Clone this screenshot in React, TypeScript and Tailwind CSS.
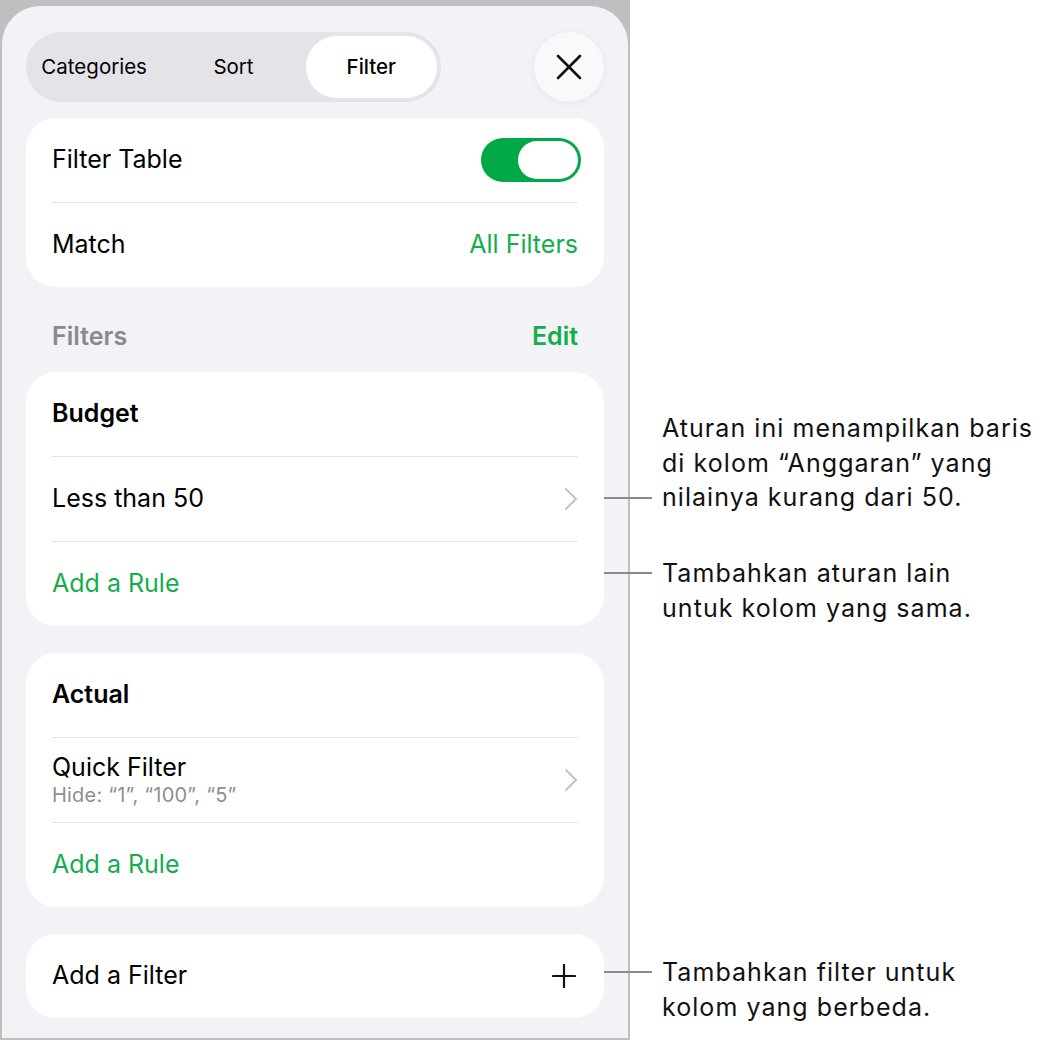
import { FC } from "react";

const green = "text-[#14ad4e]";

const Chevron: FC = () => (
  <svg width="14" height="24" viewBox="0 0 14 24" fill="none">
    <path d="M2 2l10 10-10 10" stroke="#c4c4c7" strokeWidth="2" strokeLinecap="round" strokeLinejoin="round" />
  </svg>
);

const Callout: FC<{ top: number; lineTop: number; lines: string[] }> = ({ top, lineTop, lines }) => (
  <>
    <div className="absolute left-[604px] w-[48px] h-[2px] bg-[#8a8a8a]" style={{ top: lineTop }} />
    <div
      className="absolute left-[662px] text-[25px] leading-[34.5px] text-[#111] tracking-[1.05px]"
      style={{ top }}
    >
      {lines.map((l) => (
        <div key={l}>{l}</div>
      ))}
    </div>
  </>
);

export default function App() {
  return (
    <div
      className="relative w-[1044px] h-[1041px] bg-white"
      style={{ fontFamily: "Inter, 'Noto Sans', sans-serif" }}
    >
      <div className="w-[630px] h-[1040px] bg-[#bfbfbf] pt-[6px] px-[2px] pb-[2px]">
        <div className="h-full bg-[#f2f2f7] rounded-t-[38px] px-[24px] pt-[26px] text-[25px] text-black">
          {/* top bar */}
          <div className="flex items-center justify-between">
            <div className="w-[415px] h-[70px] rounded-full bg-[#e3e3e8] p-[3px] grid grid-cols-3 text-[20.5px]">
              <div className="flex items-center justify-center pr-[6px]">Categories</div>
              <div className="flex items-center justify-center">Sort</div>
              <div className="ml-[3px] flex items-center justify-center rounded-full bg-white border border-[#e6e6ea] font-medium">
                Filter
              </div>
            </div>
            <button className="w-[70px] h-[70px] rounded-full bg-[#f9f9fb] shadow-[0_1px_8px_rgba(0,0,0,0.06)] flex items-center justify-center">
              <svg width="28" height="28" viewBox="0 0 28 28">
                <path d="M3 3l22 22M25 3L3 25" stroke="#111" strokeWidth="2.6" strokeLinecap="round" />
              </svg>
            </button>
          </div>

          {/* filter table card */}
          <div className="mt-[16px] bg-white rounded-[30px] px-[26px]">
            <div className="h-[84px] flex items-center justify-between">
              <span>Filter Table</span>
              <div className="mr-[-3px] w-[100px] h-[44px] rounded-full bg-[#00a846] p-[3px] flex justify-end">
                <div className="w-[60px] h-[38px] rounded-full bg-white" />
              </div>
            </div>
            <div className="h-[85px] border-t border-[#e3e3e6] flex items-center justify-between">
              <span>Match</span>
              <span className={green}>All Filters</span>
            </div>
          </div>

          {/* filters header */}
          <div className="h-[85px] pt-[14px] px-[26px] flex items-center justify-between">
            <span className="font-semibold text-[#8a8a8e]">Filters</span>
            <span className={`font-semibold ${green}`}>Edit</span>
          </div>

          {/* budget */}
          <div className="bg-white rounded-[30px] px-[26px]">
            <div className="h-[84px] flex items-center font-semibold">Budget</div>
            <div className="h-[85px] border-t border-[#e3e3e6] flex items-center justify-between">
              <span>Less than 50</span>
              <Chevron />
            </div>
            <div className="h-[85px] border-t border-[#e3e3e6] flex items-center">
              <span className={green}>Add a Rule</span>
            </div>
          </div>

          {/* actual */}
          <div className="mt-[27px] bg-white rounded-[30px] px-[26px]">
            <div className="h-[84px] flex items-center font-semibold">Actual</div>
            <div className="h-[85px] border-t border-[#e3e3e6] flex items-center justify-between">
              <div className="flex flex-col">
                <span className="leading-[30px]">Quick Filter</span>
                <span className="text-[20px] leading-[26px] text-[#8e8e93] tracking-[0.2px]">Hide: “1”, “100”, “5”</span>
              </div>
              <Chevron />
            </div>
            <div className="h-[85px] border-t border-[#e3e3e6] flex items-center">
              <span className={green}>Add a Rule</span>
            </div>
          </div>

          {/* add filter */}
          <div className="mt-[27px] h-[84px] bg-white rounded-[30px] px-[26px] flex items-center justify-between">
            <span>Add a Filter</span>
            <svg width="24" height="24" viewBox="0 0 24 24" className="mr-[2px]">
              <path d="M12 1v22M1 12h22" stroke="#111" strokeWidth="2.2" strokeLinecap="round" />
            </svg>
          </div>
        </div>
      </div>

      <Callout
        top={411}
        lineTop={497}
        lines={["Aturan ini menampilkan baris", "di kolom “Anggaran” yang", "nilainya kurang dari 50."]}
      />
      <Callout top={556} lineTop={572} lines={["Tambahkan aturan lain", "untuk kolom yang sama."]} />
      <Callout top={955} lineTop={971} lines={["Tambahkan filter untuk", "kolom yang berbeda."]} />
    </div>
  );
}
